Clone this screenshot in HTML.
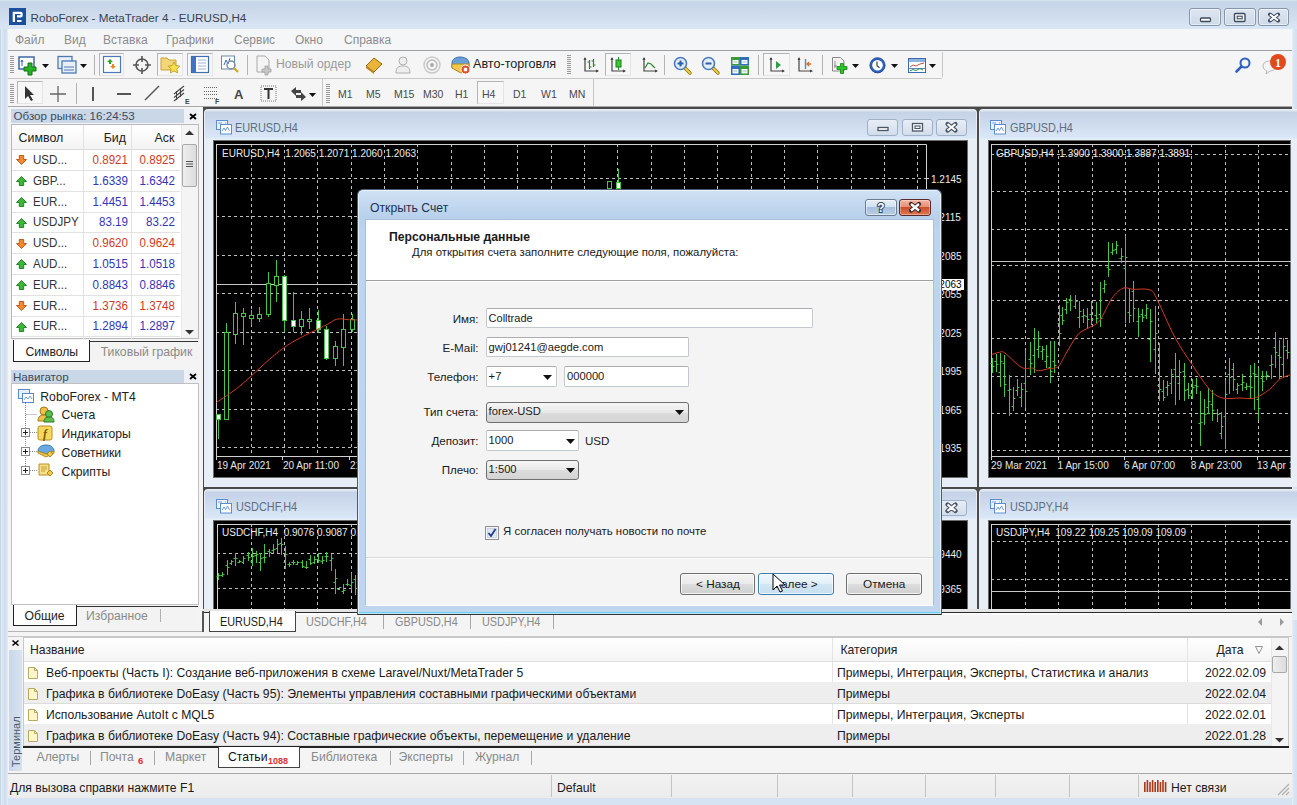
<!DOCTYPE html><html><head><meta charset="utf-8"><style>
*{margin:0;padding:0;box-sizing:border-box}
html,body{width:1297px;height:805px;overflow:hidden}
body{position:relative;background:#c6d8ed;font-family:"Liberation Sans",sans-serif;font-size:12px;color:#000}
.a{position:absolute}
.t{position:absolute;line-height:1;white-space:nowrap}
svg{position:absolute;overflow:visible}
</style></head><body><div class="a" style="left:0px;top:0px;width:1297px;height:805px;background:linear-gradient(#dbe5f0 0,#c6d4e7 2px,#cddbec 14px,#d8e6f5 28px,#d4e2f2 40px,#d6e3f2)"></div>
<div class="a" style="left:0px;top:29px;width:8px;height:776px;background:linear-gradient(90deg,#b8d0d8 0,#e0e9f6 1.5px,#cddcef 5px,#d8e4f2 7px,#eef2f6 8px)"></div>
<div class="a" style="left:1292px;top:29px;width:5px;height:776px;background:linear-gradient(90deg,#e8eef6 0,#d8e5f3 2px,#d2e0f0 5px)"></div>
<div class="a" style="left:8px;top:29px;width:1284px;height:769px;background:#f4f4f4"></div>
<svg style="left:9px;top:8px" width="17" height="17"><rect width="17" height="17" fill="#1c4f9c"/><path d="M3.7 3.7h8a2 2 0 0 1 2 2v1.8a2 2 0 0 1-2 2h-3.7v-2.2h3.5v-1.4h-5.5v8.1h-2.3z" fill="#fff"/><rect x="8" y="12" width="4.5" height="2" fill="#fff"/></svg>
<div class="t" style="left:30.5px;top:11.6px;font-size:11.7px;color:#3a4252;font-weight:400;">RoboForex - MetaTrader 4 - EURUSD,H4</div>
<div class="a" style="left:1189px;top:8px;width:32px;height:18px;background:linear-gradient(#dde6f1,#cfdae8);border:1px solid #8796ab;border-radius:3px;box-shadow:inset 0 0 0 1px rgba(255,255,255,.5)"></div>
<div class="a" style="left:1224px;top:8px;width:32px;height:18px;background:linear-gradient(#dde6f1,#cfdae8);border:1px solid #8796ab;border-radius:3px;box-shadow:inset 0 0 0 1px rgba(255,255,255,.5)"></div>
<div class="a" style="left:1258px;top:8px;width:31px;height:18px;background:linear-gradient(#dde6f1,#cfdae8);border:1px solid #8796ab;border-radius:3px;box-shadow:inset 0 0 0 1px rgba(255,255,255,.5)"></div>
<svg style="left:1189px;top:8px" width="100" height="18"><rect x="11.5" y="10" width="10" height="3.5" rx="1" fill="#fff" stroke="#3c4a5e" stroke-width="1.3"/><rect x="45.5" y="5.5" width="10.5" height="8" rx="1" fill="#fff" stroke="#3c4a5e" stroke-width="1.4"/><rect x="48.2" y="8.2" width="5" height="2.6" fill="none" stroke="#3c4a5e" stroke-width="1.1"/><path d="M81 6.5l8 6M89 6.5l-8 6" stroke="#3c4a5e" stroke-width="4" stroke-linecap="round"/><path d="M81 6.5l8 6M89 6.5l-8 6" stroke="#fff" stroke-width="2.1"/></svg>
<div class="a" style="left:8px;top:29px;width:1284px;height:21px;background:#f5f6f7"></div>
<div class="a" style="left:8px;top:50px;width:1284px;height:1px;background:#a0a0a0"></div>
<div class="t" style="left:15.0px;top:34.1px;font-size:12px;color:#8c8c8c;font-weight:400;">Файл</div>
<div class="t" style="left:64.0px;top:34.1px;font-size:12px;color:#8c8c8c;font-weight:400;">Вид</div>
<div class="t" style="left:103.0px;top:34.1px;font-size:12px;color:#8c8c8c;font-weight:400;">Вставка</div>
<div class="t" style="left:166.0px;top:34.1px;font-size:12px;color:#8c8c8c;font-weight:400;">Графики</div>
<div class="t" style="left:234.0px;top:34.1px;font-size:12px;color:#8c8c8c;font-weight:400;">Сервис</div>
<div class="t" style="left:295.0px;top:34.1px;font-size:12px;color:#8c8c8c;font-weight:400;">Окно</div>
<div class="t" style="left:344.0px;top:34.1px;font-size:12px;color:#8c8c8c;font-weight:400;">Справка</div>
<div class="a" style="left:8px;top:51px;width:1284px;height:56px;background:#f5f5f5"></div>
<div class="a" style="left:8px;top:78px;width:934px;height:1px;background:#c8c8c8"></div>
<div class="a" style="left:8px;top:106px;width:1284px;height:3px;background:#3a3a3a"></div>
<div class="a" style="left:8px;top:106px;width:1284px;height:1px;background:#a8a8a8"></div>
<svg style="left:10px;top:56px" width="4" height="18"><rect x="0" y="0" width="4" height="1" fill="#9a9a9a"/><rect x="0" y="2" width="4" height="1" fill="#9a9a9a"/><rect x="0" y="4" width="4" height="1" fill="#9a9a9a"/><rect x="0" y="6" width="4" height="1" fill="#9a9a9a"/><rect x="0" y="8" width="4" height="1" fill="#9a9a9a"/><rect x="0" y="10" width="4" height="1" fill="#9a9a9a"/><rect x="0" y="12" width="4" height="1" fill="#9a9a9a"/><rect x="0" y="14" width="4" height="1" fill="#9a9a9a"/><rect x="0" y="16" width="4" height="1" fill="#9a9a9a"/></svg>
<svg style="left:18px;top:55px" width="22" height="22"><rect x="1" y="2" width="15" height="12" fill="#fff" stroke="#3d6aa8" stroke-width="1.5"/><path d="M4 5v6M4 5l-1 2M4 5l1 2" stroke="#3d6aa8" stroke-width="1"/><path d="M10 8h4v4h4v4h-4v4h-4v-4h-4v-4h4z" fill="#27b227" stroke="#137013" stroke-width="1"/></svg>
<svg style="left:42px;top:64px" width="7" height="4"><path d="M0 0h7l-3.5 4z" fill="#111"/></svg>
<svg style="left:57px;top:55px" width="22" height="22"><rect x="1" y="1.5" width="14" height="12" fill="#e8eff8" stroke="#4e79b3" stroke-width="1.3"/><rect x="5" y="6" width="14" height="12" fill="#e8eff8" stroke="#4e79b3" stroke-width="1.3"/><path d="M7 12h10M7 15h10" stroke="#4e79b3" stroke-width="1"/></svg>
<svg style="left:80px;top:64px" width="7" height="4"><path d="M0 0h7l-3.5 4z" fill="#111"/></svg>
<div class="a" style="left:94px;top:55px;width:1px;height:20px;background:#b4b4b4"></div>
<div class="a" style="left:99px;top:53px;width:25px;height:23px;background:#f7f7f7;border:1px solid;border-color:#b4b4b4 #e4e4e4 #e4e4e4 #b4b4b4"></div>
<svg style="left:103px;top:56px" width="18" height="18"><rect x="0.5" y="0.5" width="17" height="16" fill="#fff" stroke="#4a78b8" stroke-width="1.2"/><path d="M7 3l3 3h-2v2h-2v-2h-2z" fill="#2aa52a"/><path d="M10 13l3-3h-2v-2h-2v2h-2z" fill="#e88a2a"/></svg>
<svg style="left:133px;top:56px" width="18" height="18"><circle cx="9" cy="9" r="6" fill="none" stroke="#555" stroke-width="1.6"/><path d="M9 0v6M9 12v6M0 9h6M12 9h6" stroke="#555" stroke-width="1.6"/></svg>
<div class="a" style="left:157px;top:53px;width:26px;height:23px;background:#f7f7f7;border:1px solid;border-color:#b4b4b4 #e4e4e4 #e4e4e4 #b4b4b4"></div>
<svg style="left:160px;top:55px" width="22" height="20"><path d="M1 3h6l2 2h7v10h-15z" fill="#f3d67a" stroke="#c9a23a"/><path d="M14 7l1.8 3.6 4 .5-2.9 2.8.7 4-3.6-1.9-3.6 1.9.7-4-2.9-2.8 4-.5z" fill="#f7e04a" stroke="#b8962a" stroke-width=".8"/></svg>
<div class="a" style="left:187px;top:53px;width:26px;height:23px;background:#f7f7f7;border:1px solid;border-color:#b4b4b4 #e4e4e4 #e4e4e4 #b4b4b4"></div>
<svg style="left:191px;top:56px" width="19" height="18"><rect x="0.5" y="0.5" width="17" height="16" fill="#fff" stroke="#3f6fb0" stroke-width="1.2"/><rect x="1" y="1" width="4" height="15" fill="#3f74c0"/><path d="M7 4h8M7 7h8M7 10h8M7 13h8" stroke="#9bb4d8"/></svg>
<svg style="left:221px;top:55px" width="20" height="20"><rect x="0.5" y="1" width="13" height="13" fill="#fff" stroke="#6e87a8"/><path d="M3 10l2-5 2 4 2-6" stroke="#3f6fb0" fill="none"/><circle cx="10" cy="10" r="4" fill="none" stroke="#7a8fa8" stroke-width="1.4"/><path d="M13 13l4 4" stroke="#d9a520" stroke-width="2.2"/></svg>
<div class="a" style="left:247px;top:55px;width:1px;height:20px;background:#b4b4b4"></div>
<svg style="left:256px;top:55px" width="18" height="20"><path d="M1 1h8l4 4v12h-12z" fill="#f4f4f4" stroke="#a8a8a8"/><path d="M9 11h3v3h3v3h-3v3h-3v-3h-3v-3h3z" fill="#c8c8c8" stroke="#a0a0a0" stroke-width=".8"/></svg>
<div class="t" style="left:276.0px;top:58.1px;font-size:12.2px;color:#9a9a9a;font-weight:400;">Новый ордер</div>
<svg style="left:364px;top:56px" width="20" height="18"><path d="M2 10l8-8 8 6-8 8z" fill="#e8b53a" stroke="#9a6a10"/><path d="M2 10l8 6v2l-8-6z" fill="#b8841a"/></svg>
<svg style="left:395px;top:55px" width="18" height="20"><circle cx="8" cy="6" r="4" fill="#eee" stroke="#b0b0b0"/><path d="M1 18c0-6 3-7 7-7s7 1 7 7z" fill="#eee" stroke="#b0b0b0"/></svg>
<svg style="left:423px;top:56px" width="18" height="18"><circle cx="9" cy="9" r="2" fill="#aaa"/><circle cx="9" cy="9" r="5" fill="none" stroke="#b8b8b8" stroke-width="1.4"/><circle cx="9" cy="9" r="8" fill="none" stroke="#c8c8c8" stroke-width="1.4"/></svg>
<svg style="left:451px;top:55px" width="20" height="20"><path d="M1 8c0-4 4-6 8-6s9 2 9 6v5h-17z" fill="#6aa0d8" stroke="#3d6ea8"/><path d="M1 9h17v4l-8 5-9-5z" fill="#f2c84a" stroke="#b08a20"/><circle cx="14.5" cy="14.5" r="4.5" fill="#e24a2a" stroke="#fff"/><rect x="12.8" y="12.8" width="3.4" height="3.4" fill="#fff"/></svg>
<div class="t" style="left:473.0px;top:58.0px;font-size:12.6px;color:#222;font-weight:400;">Авто-торговля</div>
<svg style="left:567px;top:55px" width="4" height="20"><rect x="0" y="0" width="4" height="1" fill="#9a9a9a"/><rect x="0" y="2" width="4" height="1" fill="#9a9a9a"/><rect x="0" y="4" width="4" height="1" fill="#9a9a9a"/><rect x="0" y="6" width="4" height="1" fill="#9a9a9a"/><rect x="0" y="8" width="4" height="1" fill="#9a9a9a"/><rect x="0" y="10" width="4" height="1" fill="#9a9a9a"/><rect x="0" y="12" width="4" height="1" fill="#9a9a9a"/><rect x="0" y="14" width="4" height="1" fill="#9a9a9a"/><rect x="0" y="16" width="4" height="1" fill="#9a9a9a"/><rect x="0" y="18" width="4" height="1" fill="#9a9a9a"/></svg>
<svg style="left:582px;top:56px" width="18" height="18"><path d="M3 2v13h13" stroke="#444" fill="none" stroke-width="1.2"/><path d="M1.5 4l1.5-3 1.5 3M14 13.5l3 1.5-3 1.5" fill="#444"/><path d="M7.5 4v9M5.5 6h2M7.5 11h2M11.5 3v8M9.5 5h2M11.5 9h2" stroke="#2a8a2a" stroke-width="1.2"/></svg>
<div class="a" style="left:605px;top:53px;width:26px;height:23px;background:#f7f7f7;border:1px solid;border-color:#b4b4b4 #e4e4e4 #e4e4e4 #b4b4b4"></div>
<svg style="left:609px;top:56px" width="18" height="18"><path d="M3 2v13h13" stroke="#444" fill="none" stroke-width="1.2"/><path d="M1.5 4l1.5-3 1.5 3M14 13.5l3 1.5-3 1.5" fill="#444"/><path d="M9.5 1v13" stroke="#2a8a2a"/><rect x="7" y="4" width="5" height="7" fill="#3cc43c" stroke="#1e7a1e"/></svg>
<svg style="left:641px;top:56px" width="18" height="18"><path d="M3 2v13h13" stroke="#444" fill="none" stroke-width="1.2"/><path d="M1.5 4l1.5-3 1.5 3M14 13.5l3 1.5-3 1.5" fill="#444"/><path d="M4 12l3-5 3 1 4 4" stroke="#2a8a2a" fill="none" stroke-width="1.2"/></svg>
<div class="a" style="left:664px;top:55px;width:1px;height:20px;background:#b4b4b4"></div>
<svg style="left:673px;top:56px" width="20" height="20"><path d="M11.5 11.5l5.5 5.5" stroke="#8a7010" stroke-width="3.4" stroke-linecap="round"/><path d="M11.5 11.5l5.5 5.5" stroke="#f0d040" stroke-width="1.8" stroke-linecap="round"/><circle cx="7.5" cy="7.5" r="6" fill="#e4eef8" stroke="#4a7ac0" stroke-width="1.6"/><path d="M4.5 7.5h6M7.5 4.5v6" stroke="#2a5fb0" stroke-width="2"/></svg>
<svg style="left:701px;top:56px" width="20" height="20"><path d="M11.5 11.5l5.5 5.5" stroke="#8a7010" stroke-width="3.4" stroke-linecap="round"/><path d="M11.5 11.5l5.5 5.5" stroke="#f0d040" stroke-width="1.8" stroke-linecap="round"/><circle cx="7.5" cy="7.5" r="6" fill="#e4eef8" stroke="#4a7ac0" stroke-width="1.6"/><path d="M4.5 7.5h6" stroke="#2a5fb0" stroke-width="2"/></svg>
<svg style="left:731px;top:57px" width="18" height="18"><rect x="0" y="0" width="9" height="8.5" fill="#3a9a3a"/><rect x="9" y="0" width="9" height="8.5" fill="#2f6cc0"/><rect x="0" y="8.5" width="9" height="9.5" fill="#2f6cc0"/><rect x="9" y="8.5" width="9" height="9.5" fill="#3a9a3a"/><rect x="1.5" y="3" width="6" height="4" fill="#f4f8fc"/><rect x="10.5" y="3" width="6" height="4" fill="#f4f8fc"/><rect x="1.5" y="12" width="6" height="4.5" fill="#f4f8fc"/><rect x="10.5" y="12" width="6" height="4.5" fill="#f4f8fc"/><path d="M2.5 5h4M11.5 5h4M2.5 14h4M11.5 14h4" stroke="#8aa" stroke-width=".7"/></svg>
<div class="a" style="left:758px;top:55px;width:1px;height:20px;background:#b4b4b4"></div>
<div class="a" style="left:763px;top:53px;width:27px;height:23px;background:#f7f7f7;border:1px solid;border-color:#b4b4b4 #e4e4e4 #e4e4e4 #b4b4b4"></div>
<svg style="left:768px;top:56px" width="18" height="18"><path d="M3 2v13h13" stroke="#444" fill="none" stroke-width="1.2"/><path d="M1.5 4l1.5-3 1.5 3M14 13.5l3 1.5-3 1.5" fill="#444"/><path d="M8 5v8l5-4z" fill="#2aa04a"/></svg>
<svg style="left:796px;top:56px" width="18" height="18"><path d="M3 2v13h13" stroke="#444" fill="none" stroke-width="1.2"/><path d="M1.5 4l1.5-3 1.5 3M14 13.5l3 1.5-3 1.5" fill="#444"/><path d="M9.5 3v10" stroke="#4a8ac0" stroke-width="1.4"/><path d="M15 8h-4M13 6l-2 2 2 2" stroke="#e06a20" fill="none" stroke-width="1.3"/></svg>
<div class="a" style="left:822px;top:55px;width:1px;height:20px;background:#b4b4b4"></div>
<svg style="left:832px;top:57px" width="18" height="19"><path d="M.5 .5h8l3.5 3.5v10h-11.5z" fill="#f2f2f2" stroke="#8a8a8a"/><path d="M3 4v7M2 9h3" stroke="#777" stroke-width=".8"/><path d="M8.5 6.5h3v3h3.5v3h-3.5v4h-3v-4h-3.5v-3h3.5z" fill="#2ec42e" stroke="#158015" stroke-width=".8"/></svg>
<svg style="left:852px;top:64px" width="7" height="4"><path d="M0 0h7l-3.5 4z" fill="#111"/></svg>
<svg style="left:869px;top:57px" width="18" height="17"><circle cx="8.5" cy="8.3" r="7.6" fill="#2a62c4" stroke="#1a3a80" stroke-width=".8"/><circle cx="8.5" cy="8.3" r="5.3" fill="#fff"/><path d="M8 4.5v4.3l2.5 2" stroke="#333" fill="none" stroke-width="1.1"/></svg>
<svg style="left:891px;top:64px" width="7" height="4"><path d="M0 0h7l-3.5 4z" fill="#111"/></svg>
<svg style="left:908px;top:58px" width="18" height="15"><rect x="0.5" y="0.5" width="17" height="14" fill="#fff" stroke="#3a6ab0"/><rect x="1" y="1" width="16" height="3" fill="#8fb2e0"/><path d="M2 9l3-2 3 1 4-2 4-1" stroke="#c05040" fill="none" stroke-width="1"/><path d="M1 10.5h16" stroke="#3a6ab0" stroke-width=".8"/><path d="M2 13l3-1.5 3 1 4-2 3 1.5" stroke="#2a8a4a" fill="none" stroke-width="1"/></svg>
<svg style="left:929px;top:64px" width="7" height="4"><path d="M0 0h7l-3.5 4z" fill="#111"/></svg>
<div class="a" style="left:942px;top:52px;width:1px;height:25px;background:#c8c8c8"></div>
<svg style="left:1235px;top:57px" width="17" height="16"><circle cx="10" cy="6" r="4.5" fill="none" stroke="#2f5fc0" stroke-width="2"/><path d="M6.5 9.5l-5 5" stroke="#2f5fc0" stroke-width="2.6" stroke-linecap="round"/></svg>
<svg style="left:1261px;top:53px" width="28" height="24"><path d="M2 13c0-3 3-5 7-5s6 2 6 5-3 5-6 5l-4 3 1-3c-2-1-4-2-4-5z" fill="#f4f4f4" stroke="#b8b8b8"/><circle cx="17" cy="9" r="8" fill="#e04a1c"/><text x="17" y="13.5" font-family="Liberation Serif" font-size="12" font-weight="700" fill="#fff" text-anchor="middle">1</text></svg>
<svg style="left:10px;top:84px" width="4" height="20"><rect x="0" y="0" width="4" height="1" fill="#9a9a9a"/><rect x="0" y="2" width="4" height="1" fill="#9a9a9a"/><rect x="0" y="4" width="4" height="1" fill="#9a9a9a"/><rect x="0" y="6" width="4" height="1" fill="#9a9a9a"/><rect x="0" y="8" width="4" height="1" fill="#9a9a9a"/><rect x="0" y="10" width="4" height="1" fill="#9a9a9a"/><rect x="0" y="12" width="4" height="1" fill="#9a9a9a"/><rect x="0" y="14" width="4" height="1" fill="#9a9a9a"/><rect x="0" y="16" width="4" height="1" fill="#9a9a9a"/><rect x="0" y="18" width="4" height="1" fill="#9a9a9a"/></svg>
<div class="a" style="left:17px;top:81px;width:26px;height:23px;background:#f7f7f7;border:1px solid;border-color:#b4b4b4 #e4e4e4 #e4e4e4 #b4b4b4"></div>
<svg style="left:23px;top:85px" width="14" height="16"><path d="M2 1v13l3-3 3 5 2-1-3-5h4z" fill="#333"/></svg>
<svg style="left:49px;top:85px" width="18" height="18"><path d="M9 1v16M1 9h16" stroke="#666" stroke-width="1.3"/></svg>
<div class="a" style="left:76px;top:83px;width:1px;height:21px;background:#b4b4b4"></div>
<div class="a" style="left:92px;top:87px;width:2px;height:14px;background:#555"></div>
<div class="a" style="left:117px;top:93px;width:14px;height:2px;background:#555"></div>
<svg style="left:144px;top:85px" width="16" height="16"><path d="M1 15l14-14" stroke="#555" stroke-width="1.4"/></svg>
<svg style="left:172px;top:84px" width="20" height="22"><path d="M2 10l10-8M2 13.5l10-8M2 17l10-8" stroke="#444" stroke-width="1.1"/><path d="M4.5 7v9M8.5 4v9" stroke="#444"/><text x="13" y="20" font-family="Liberation Sans" font-size="7" font-weight="700" fill="#444">E</text></svg>
<svg style="left:203px;top:85px" width="20" height="20"><path d="M1 2.5h13M1 6.5h13M1 9.5h13M1 13.5h13" stroke="#666" stroke-dasharray="1 1"/><text x="12" y="19" font-family="Liberation Sans" font-size="7" font-weight="700" fill="#444">F</text></svg>
<div class="t" style="left:234.0px;top:87.5px;font-size:13px;color:#444;font-weight:700;">A</div>
<svg style="left:260px;top:85px" width="18" height="18"><rect x="1" y="1" width="15" height="15" fill="none" stroke="#777" stroke-dasharray="1 1"/><path d="M4 4h9M8.5 4v10" stroke="#333" stroke-width="2"/></svg>
<svg style="left:290px;top:86px" width="18" height="16"><path d="M1 5l5-4v3h5v3h-5v3z" fill="#444"/><path d="M16 11l-5 4v-3h-5v-3h5v-3z" fill="#444"/></svg>
<svg style="left:309px;top:93px" width="7" height="4"><path d="M0 0h7l-3.5 4z" fill="#111"/></svg>
<div class="a" style="left:322px;top:79px;width:1px;height:27px;background:#c8c8c8"></div>
<svg style="left:326px;top:84px" width="4" height="20"><rect x="0" y="0" width="4" height="1" fill="#9a9a9a"/><rect x="0" y="2" width="4" height="1" fill="#9a9a9a"/><rect x="0" y="4" width="4" height="1" fill="#9a9a9a"/><rect x="0" y="6" width="4" height="1" fill="#9a9a9a"/><rect x="0" y="8" width="4" height="1" fill="#9a9a9a"/><rect x="0" y="10" width="4" height="1" fill="#9a9a9a"/><rect x="0" y="12" width="4" height="1" fill="#9a9a9a"/><rect x="0" y="14" width="4" height="1" fill="#9a9a9a"/><rect x="0" y="16" width="4" height="1" fill="#9a9a9a"/><rect x="0" y="18" width="4" height="1" fill="#9a9a9a"/></svg>
<div class="t" style="left:338.0px;top:88.8px;font-size:10.5px;color:#4a4a4a;font-weight:400;">M1</div>
<div class="t" style="left:366.0px;top:88.8px;font-size:10.5px;color:#4a4a4a;font-weight:400;">M5</div>
<div class="t" style="left:394.0px;top:88.8px;font-size:10.5px;color:#4a4a4a;font-weight:400;">M15</div>
<div class="t" style="left:423.0px;top:88.8px;font-size:10.5px;color:#4a4a4a;font-weight:400;">M30</div>
<div class="t" style="left:455.0px;top:88.8px;font-size:10.5px;color:#4a4a4a;font-weight:400;">H1</div>
<div class="a" style="left:477px;top:81px;width:27px;height:23px;background:#f7f7f7;border:1px solid;border-color:#b4b4b4 #e4e4e4 #e4e4e4 #b4b4b4"></div>
<div class="t" style="left:482.0px;top:88.8px;font-size:10.5px;color:#4a4a4a;font-weight:400;">H4</div>
<div class="t" style="left:513.0px;top:88.8px;font-size:10.5px;color:#4a4a4a;font-weight:400;">D1</div>
<div class="t" style="left:541.0px;top:88.8px;font-size:10.5px;color:#4a4a4a;font-weight:400;">W1</div>
<div class="t" style="left:569.0px;top:88.8px;font-size:10.5px;color:#4a4a4a;font-weight:400;">MN</div>
<div class="a" style="left:593px;top:79px;width:1px;height:27px;background:#c8c8c8"></div>
<div class="a" style="left:8px;top:107px;width:195px;height:525px;background:#f4f4f4"></div>
<div class="a" style="left:11px;top:109px;width:173px;height:14px;background:#cad7e7"></div>
<div class="a" style="left:184px;top:109px;width:15px;height:14px;background:#eef2f6"></div>
<div class="t" style="left:13.5px;top:110.4px;font-size:11.6px;color:#3b4a5c;font-weight:400;">Обзор рынка: 16:24:53</div>
<svg style="left:189px;top:113px" width="8" height="7"><path d="M1 1l6 5M7 1l-6 5" stroke="#000" stroke-width="1.8"/></svg>
<div class="a" style="left:11px;top:124px;width:188px;height:215px;background:#fff;border:1px solid #b8b8b8"></div>
<div class="a" style="left:12px;top:125px;width:168px;height:24px;background:linear-gradient(#fff,#f3f3f3)"></div>
<div class="a" style="left:12px;top:149px;width:168px;height:1px;background:#d8d8d8"></div>
<div class="a" style="left:83px;top:125px;width:1px;height:214px;background:#e2e2e2"></div>
<div class="a" style="left:131px;top:125px;width:1px;height:214px;background:#e2e2e2"></div>
<div class="t" style="left:18.6px;top:132.0px;font-size:12.4px;color:#222;font-weight:400;">Символ</div>
<div class="t" style="left:126.0px;top:132.0px;font-size:12.4px;color:#222;font-weight:400;transform:translateX(-100%)">Бид</div>
<div class="t" style="left:174.5px;top:132.0px;font-size:12.4px;color:#222;font-weight:400;transform:translateX(-100%)">Аск</div>
<div class="a" style="left:12px;top:170px;width:168px;height:1px;background:#e2e2e2"></div>
<svg style="left:16px;top:155.4px" width="11" height="10"><path d="M5.5 9.5l5-5h-2.8v-4h-4.4v4h-2.8z" fill="#f08a30" stroke="#b85010" stroke-width=".9"/></svg>
<div class="t" style="left:33.0px;top:154.0px;font-size:12.6px;color:#333;font-weight:400;transform:scaleX(.92);transform-origin:0 0">USD...</div>
<div class="t" style="left:127.5px;top:154.0px;font-size:12.6px;color:#cf3a22;font-weight:400;transform:translateX(-100%) scaleX(.92);transform-origin:100% 0">0.8921</div>
<div class="t" style="left:174.5px;top:154.0px;font-size:12.6px;color:#cf3a22;font-weight:400;transform:translateX(-100%) scaleX(.92);transform-origin:100% 0">0.8925</div>
<div class="a" style="left:12px;top:191px;width:168px;height:1px;background:#e2e2e2"></div>
<svg style="left:16px;top:176.2px" width="11" height="10"><path d="M5.5 0.5l5 5h-2.8v4h-4.4v-4h-2.8z" fill="#39b739" stroke="#1d7a1d" stroke-width=".9"/></svg>
<div class="t" style="left:33.0px;top:174.8px;font-size:12.6px;color:#333;font-weight:400;transform:scaleX(.92);transform-origin:0 0">GBP...</div>
<div class="t" style="left:127.5px;top:174.8px;font-size:12.6px;color:#3434b8;font-weight:400;transform:translateX(-100%) scaleX(.92);transform-origin:100% 0">1.6339</div>
<div class="t" style="left:174.5px;top:174.8px;font-size:12.6px;color:#3434b8;font-weight:400;transform:translateX(-100%) scaleX(.92);transform-origin:100% 0">1.6342</div>
<div class="a" style="left:12px;top:212px;width:168px;height:1px;background:#e2e2e2"></div>
<svg style="left:16px;top:197.0px" width="11" height="10"><path d="M5.5 0.5l5 5h-2.8v4h-4.4v-4h-2.8z" fill="#39b739" stroke="#1d7a1d" stroke-width=".9"/></svg>
<div class="t" style="left:33.0px;top:195.6px;font-size:12.6px;color:#333;font-weight:400;transform:scaleX(.92);transform-origin:0 0">EUR...</div>
<div class="t" style="left:127.5px;top:195.6px;font-size:12.6px;color:#3434b8;font-weight:400;transform:translateX(-100%) scaleX(.92);transform-origin:100% 0">1.4451</div>
<div class="t" style="left:174.5px;top:195.6px;font-size:12.6px;color:#3434b8;font-weight:400;transform:translateX(-100%) scaleX(.92);transform-origin:100% 0">1.4453</div>
<div class="a" style="left:12px;top:232px;width:168px;height:1px;background:#e2e2e2"></div>
<svg style="left:16px;top:217.8px" width="11" height="10"><path d="M5.5 0.5l5 5h-2.8v4h-4.4v-4h-2.8z" fill="#39b739" stroke="#1d7a1d" stroke-width=".9"/></svg>
<div class="t" style="left:33.0px;top:216.4px;font-size:12.6px;color:#333;font-weight:400;transform:scaleX(.92);transform-origin:0 0">USDJPY</div>
<div class="t" style="left:127.5px;top:216.4px;font-size:12.6px;color:#3434b8;font-weight:400;transform:translateX(-100%) scaleX(.92);transform-origin:100% 0">83.19</div>
<div class="t" style="left:174.5px;top:216.4px;font-size:12.6px;color:#3434b8;font-weight:400;transform:translateX(-100%) scaleX(.92);transform-origin:100% 0">83.22</div>
<div class="a" style="left:12px;top:253px;width:168px;height:1px;background:#e2e2e2"></div>
<svg style="left:16px;top:238.6px" width="11" height="10"><path d="M5.5 9.5l5-5h-2.8v-4h-4.4v4h-2.8z" fill="#f08a30" stroke="#b85010" stroke-width=".9"/></svg>
<div class="t" style="left:33.0px;top:237.2px;font-size:12.6px;color:#333;font-weight:400;transform:scaleX(.92);transform-origin:0 0">USD...</div>
<div class="t" style="left:127.5px;top:237.2px;font-size:12.6px;color:#cf3a22;font-weight:400;transform:translateX(-100%) scaleX(.92);transform-origin:100% 0">0.9620</div>
<div class="t" style="left:174.5px;top:237.2px;font-size:12.6px;color:#cf3a22;font-weight:400;transform:translateX(-100%) scaleX(.92);transform-origin:100% 0">0.9624</div>
<div class="a" style="left:12px;top:274px;width:168px;height:1px;background:#e2e2e2"></div>
<svg style="left:16px;top:259.4px" width="11" height="10"><path d="M5.5 0.5l5 5h-2.8v4h-4.4v-4h-2.8z" fill="#39b739" stroke="#1d7a1d" stroke-width=".9"/></svg>
<div class="t" style="left:33.0px;top:258.0px;font-size:12.6px;color:#333;font-weight:400;transform:scaleX(.92);transform-origin:0 0">AUD...</div>
<div class="t" style="left:127.5px;top:258.0px;font-size:12.6px;color:#3434b8;font-weight:400;transform:translateX(-100%) scaleX(.92);transform-origin:100% 0">1.0515</div>
<div class="t" style="left:174.5px;top:258.0px;font-size:12.6px;color:#3434b8;font-weight:400;transform:translateX(-100%) scaleX(.92);transform-origin:100% 0">1.0518</div>
<div class="a" style="left:12px;top:295px;width:168px;height:1px;background:#e2e2e2"></div>
<svg style="left:16px;top:280.2px" width="11" height="10"><path d="M5.5 0.5l5 5h-2.8v4h-4.4v-4h-2.8z" fill="#39b739" stroke="#1d7a1d" stroke-width=".9"/></svg>
<div class="t" style="left:33.0px;top:278.8px;font-size:12.6px;color:#333;font-weight:400;transform:scaleX(.92);transform-origin:0 0">EUR...</div>
<div class="t" style="left:127.5px;top:278.8px;font-size:12.6px;color:#3434b8;font-weight:400;transform:translateX(-100%) scaleX(.92);transform-origin:100% 0">0.8843</div>
<div class="t" style="left:174.5px;top:278.8px;font-size:12.6px;color:#3434b8;font-weight:400;transform:translateX(-100%) scaleX(.92);transform-origin:100% 0">0.8846</div>
<div class="a" style="left:12px;top:316px;width:168px;height:1px;background:#e2e2e2"></div>
<svg style="left:16px;top:301.0px" width="11" height="10"><path d="M5.5 9.5l5-5h-2.8v-4h-4.4v4h-2.8z" fill="#f08a30" stroke="#b85010" stroke-width=".9"/></svg>
<div class="t" style="left:33.0px;top:299.6px;font-size:12.6px;color:#333;font-weight:400;transform:scaleX(.92);transform-origin:0 0">EUR...</div>
<div class="t" style="left:127.5px;top:299.6px;font-size:12.6px;color:#cf3a22;font-weight:400;transform:translateX(-100%) scaleX(.92);transform-origin:100% 0">1.3736</div>
<div class="t" style="left:174.5px;top:299.6px;font-size:12.6px;color:#cf3a22;font-weight:400;transform:translateX(-100%) scaleX(.92);transform-origin:100% 0">1.3748</div>
<div class="a" style="left:12px;top:336px;width:168px;height:1px;background:#e2e2e2"></div>
<svg style="left:16px;top:321.8px" width="11" height="10"><path d="M5.5 0.5l5 5h-2.8v4h-4.4v-4h-2.8z" fill="#39b739" stroke="#1d7a1d" stroke-width=".9"/></svg>
<div class="t" style="left:33.0px;top:320.4px;font-size:12.6px;color:#333;font-weight:400;transform:scaleX(.92);transform-origin:0 0">EUR...</div>
<div class="t" style="left:127.5px;top:320.4px;font-size:12.6px;color:#3434b8;font-weight:400;transform:translateX(-100%) scaleX(.92);transform-origin:100% 0">1.2894</div>
<div class="t" style="left:174.5px;top:320.4px;font-size:12.6px;color:#3434b8;font-weight:400;transform:translateX(-100%) scaleX(.92);transform-origin:100% 0">1.2897</div>
<div class="a" style="left:181px;top:125px;width:17px;height:213px;background:#f4f4f4;border-left:1px solid #e8e8e8"></div>
<svg style="left:185px;top:130px" width="9" height="6"><path d="M0 5l4.5-4.5 4.5 4.5z" fill="#333"/></svg>
<svg style="left:185px;top:329px" width="9" height="6"><path d="M0 1l4.5 4.5 4.5-4.5z" fill="#333"/></svg>
<div class="a" style="left:182px;top:144px;width:15px;height:43px;background:linear-gradient(90deg,#eee,#dcdcdc);border:1px solid #a8a8a8;border-radius:2px"></div>
<svg style="left:186px;top:161px" width="7" height="7"><path d="M0 0.5h7M0 3h7M0 5.5h7" stroke="#555"/></svg>
<div class="a" style="left:89px;top:341px;width:109px;height:1px;background:#333"></div>
<div class="a" style="left:90px;top:342px;width:108px;height:19px;background:#f3f3f3"></div>
<div class="a" style="left:13px;top:340px;width:77px;height:22px;background:#fff;border:1.5px solid #222;border-top:none"></div>
<div class="t" style="left:25.4px;top:346.1px;font-size:12.2px;color:#222;font-weight:400;">Символы</div>
<div class="t" style="left:100.7px;top:346.1px;font-size:12.2px;color:#8a8a8a;font-weight:400;">Тиковый график</div>
<div class="a" style="left:11px;top:370px;width:173px;height:13px;background:#cad7e7"></div>
<div class="a" style="left:184px;top:370px;width:15px;height:13px;background:#eef2f6"></div>
<div class="t" style="left:13.0px;top:371.4px;font-size:11.6px;color:#3b4a5c;font-weight:400;">Навигатор</div>
<svg style="left:189px;top:373px" width="8" height="7"><path d="M1 1l6 5M7 1l-6 5" stroke="#000" stroke-width="1.8"/></svg>
<div class="a" style="left:11px;top:383px;width:188px;height:222px;background:#fff;border:1px solid #c0c0c0"></div>
<svg style="left:20px;top:400px" width="20" height="78"><path d="M5.5 3v68M5.5 14.5h12M10 32.5h7M10 51.5h7M10 70.5h7" stroke="#909090" stroke-dasharray="1 1" fill="none"/><rect x="1.5" y="28.5" width="8" height="8" fill="#fff" stroke="#8a8a8a"/><path d="M3 32.5h5M5.5 30v5" stroke="#222"/><rect x="1.5" y="47.5" width="8" height="8" fill="#fff" stroke="#8a8a8a"/><path d="M3 51.5h5M5.5 49v5" stroke="#222"/><rect x="1.5" y="66.5" width="8" height="8" fill="#fff" stroke="#8a8a8a"/><path d="M3 70.5h5M5.5 68v5" stroke="#222"/></svg>
<svg style="left:18px;top:389px" width="17" height="15"><rect x="0.5" y="0.5" width="11" height="9" fill="#e8f0fa" stroke="#5a88c8"/><rect x="4.5" y="4.5" width="11" height="9" fill="#fff" stroke="#5a88c8"/><path d="M6 11l2-3 2 2 2-3 2 3" stroke="#5a88c8" fill="none" stroke-width=".8"/></svg>
<div class="t" style="left:40.3px;top:390.6px;font-size:12.2px;color:#222;font-weight:400;">RoboForex - MT4</div>
<svg style="left:37px;top:406px" width="18" height="17"><circle cx="7" cy="5" r="4" fill="#f2c048" stroke="#a07a18"/><path d="M1 15c0-5 3-6 6-6s6 1 6 6z" fill="#f2c048" stroke="#a07a18"/><circle cx="12" cy="8" r="3.5" fill="#5bbf4a" stroke="#2a7a2a"/><path d="M7 16c0-4 2-5 5-5s5 1 5 5z" fill="#5bbf4a" stroke="#2a7a2a"/></svg>
<div class="t" style="left:61.6px;top:409.1px;font-size:12.2px;color:#222;font-weight:400;">Счета</div>
<svg style="left:37px;top:425px" width="17" height="16"><rect x="1" y="1" width="14" height="14" rx="2" fill="#f6d860" stroke="#b89020"/><text x="8" y="12.5" font-family="Liberation Serif" font-size="12" font-style="italic" font-weight="700" fill="#7a5a00" text-anchor="middle">f</text></svg>
<div class="t" style="left:61.6px;top:428.1px;font-size:12.2px;color:#222;font-weight:400;">Индикаторы</div>
<svg style="left:37px;top:444px" width="18" height="16"><path d="M1 7c0-4 4-6 8-6s8 2 8 6l-8 3z" fill="#6aa8e0" stroke="#3a78b8"/><path d="M1 7l8 3 8-3v2l-8 4-8-4z" fill="#f2c84a" stroke="#a88a20"/><path d="M10 10l3 3 3-3 -3-3z" fill="#f2c84a" stroke="#a88a20"/></svg>
<div class="t" style="left:61.6px;top:447.1px;font-size:12.2px;color:#222;font-weight:400;">Советники</div>
<svg style="left:37px;top:463px" width="17" height="17"><path d="M2 1h10v11h-10z" fill="#f6e08a" stroke="#b89020"/><path d="M4 4h6M4 6h6M4 8h4" stroke="#b89020" stroke-width=".8"/><path d="M10 10l3 3 3-3-3-3z" fill="#f2c84a" stroke="#a88a20"/></svg>
<div class="t" style="left:61.6px;top:466.1px;font-size:12.2px;color:#222;font-weight:400;">Скрипты</div>
<div class="a" style="left:76px;top:606px;width:122px;height:1px;background:#333"></div>
<div class="a" style="left:77px;top:607px;width:121px;height:18px;background:#f3f3f3"></div>
<div class="a" style="left:13px;top:605px;width:64px;height:21px;background:#fff;border:1.5px solid #222;border-top:none"></div>
<div class="t" style="left:24.5px;top:610.1px;font-size:12.2px;color:#222;font-weight:400;">Общие</div>
<div class="t" style="left:86.0px;top:610.1px;font-size:12.2px;color:#8a8a8a;font-weight:400;">Избранное</div>
<div class="a" style="left:160px;top:609px;width:1px;height:13px;background:#b0b0b0"></div>
<div class="a" style="left:203px;top:107px;width:1089px;height:504px;background:#4a4a4a"></div>
<div class="a" style="left:204px;top:109px;width:773px;height:378px;background:#e8eef6;border-radius:4px 4px 0 0"></div>
<div class="a" style="left:205px;top:110px;width:771px;height:29px;background:linear-gradient(#dfe5ee 0,#dfe5ee 1px,#c5d2e7 2px,#d9e7f7 28px,#e8f0fa 29px);border-radius:3px 3px 0 0"></div>
<svg style="left:216px;top:120px" width="16" height="15"><rect x="0.5" y="0.5" width="11" height="9" fill="#eaf2fb" stroke="#5a8ed0"/><rect x="4.5" y="4.5" width="11" height="9.5" fill="#fff" stroke="#5a8ed0"/><path d="M2 3h4M9 3h1" stroke="#5a8ed0" stroke-width=".8"/><path d="M6 11l2-3 1.5 2.5 2-3.5 2 4" stroke="#5a8ed0" fill="none" stroke-width=".9"/></svg>
<div class="t" style="left:235.0px;top:121.5px;font-size:12.8px;color:#5f6e82;font-weight:400;transform:scaleX(.85);transform-origin:0 0">EURUSD,H4</div>
<div class="a" style="left:867px;top:119px;width:31px;height:17px;background:linear-gradient(#e8eef6,#d2ddea);border:1px solid #9fb1c8;border-radius:3px"></div>
<div class="a" style="left:902px;top:119px;width:31px;height:17px;background:linear-gradient(#e8eef6,#d2ddea);border:1px solid #9fb1c8;border-radius:3px"></div>
<div class="a" style="left:936px;top:119px;width:31px;height:17px;background:linear-gradient(#e8eef6,#d2ddea);border:1px solid #9fb1c8;border-radius:3px"></div>
<svg style="left:867px;top:119px" width="100" height="17"><rect x="11" y="8.5" width="10" height="3" fill="#fff" stroke="#4a5568" stroke-width="1.3"/><rect x="45.5" y="4.5" width="10" height="7.5" fill="#fff" stroke="#4a5568" stroke-width="1.3"/><rect x="48" y="7" width="5" height="2.5" fill="none" stroke="#4a5568" stroke-width="1.1"/><path d="M80.5 5l8 6.5M88.5 5l-8 6.5" stroke="#4a5568" stroke-width="4.2" stroke-linecap="round"/><path d="M80.5 5l8 6.5M88.5 5l-8 6.5" stroke="#fff" stroke-width="2.2"/></svg>
<div class="a" style="left:979px;top:109px;width:321px;height:378px;background:#e8eef6;border-radius:4px 4px 0 0"></div>
<div class="a" style="left:980px;top:110px;width:319px;height:29px;background:linear-gradient(#dfe5ee 0,#dfe5ee 1px,#c5d2e7 2px,#d9e7f7 28px,#e8f0fa 29px);border-radius:3px 3px 0 0"></div>
<svg style="left:990px;top:120px" width="16" height="15"><rect x="0.5" y="0.5" width="11" height="9" fill="#eaf2fb" stroke="#5a8ed0"/><rect x="4.5" y="4.5" width="11" height="9.5" fill="#fff" stroke="#5a8ed0"/><path d="M2 3h4M9 3h1" stroke="#5a8ed0" stroke-width=".8"/><path d="M6 11l2-3 1.5 2.5 2-3.5 2 4" stroke="#5a8ed0" fill="none" stroke-width=".9"/></svg>
<div class="t" style="left:1010.0px;top:121.5px;font-size:12.8px;color:#5f6e82;font-weight:400;transform:scaleX(.85);transform-origin:0 0">GBPUSD,H4</div>
<div class="a" style="left:204px;top:489px;width:773px;height:131px;background:#e8eef6;border-radius:4px 4px 0 0"></div>
<div class="a" style="left:205px;top:490px;width:771px;height:29px;background:linear-gradient(#dfe5ee 0,#dfe5ee 1px,#c5d2e7 2px,#d9e7f7 28px,#e8f0fa 29px);border-radius:3px 3px 0 0"></div>
<svg style="left:216px;top:499px" width="16" height="15"><rect x="0.5" y="0.5" width="11" height="9" fill="#eaf2fb" stroke="#5a8ed0"/><rect x="4.5" y="4.5" width="11" height="9.5" fill="#fff" stroke="#5a8ed0"/><path d="M2 3h4M9 3h1" stroke="#5a8ed0" stroke-width=".8"/><path d="M6 11l2-3 1.5 2.5 2-3.5 2 4" stroke="#5a8ed0" fill="none" stroke-width=".9"/></svg>
<div class="t" style="left:236.0px;top:500.5px;font-size:12.8px;color:#5f6e82;font-weight:400;transform:scaleX(.85);transform-origin:0 0">USDCHF,H4</div>
<div class="a" style="left:936px;top:500px;width:31px;height:16px;background:linear-gradient(#e8eef6,#d2ddea);border:1px solid #9fb1c8;border-radius:3px"></div>
<svg style="left:936px;top:500px" width="31" height="16"><path d="M11.5 4.5l8 6.5M19.5 4.5l-8 6.5" stroke="#4a5568" stroke-width="4.2" stroke-linecap="round"/><path d="M11.5 4.5l8 6.5M19.5 4.5l-8 6.5" stroke="#fff" stroke-width="2.2"/></svg>
<div class="a" style="left:979px;top:489px;width:321px;height:131px;background:#e8eef6;border-radius:4px 4px 0 0"></div>
<div class="a" style="left:980px;top:490px;width:319px;height:29px;background:linear-gradient(#dfe5ee 0,#dfe5ee 1px,#c5d2e7 2px,#d9e7f7 28px,#e8f0fa 29px);border-radius:3px 3px 0 0"></div>
<svg style="left:990px;top:499px" width="16" height="15"><rect x="0.5" y="0.5" width="11" height="9" fill="#eaf2fb" stroke="#5a8ed0"/><rect x="4.5" y="4.5" width="11" height="9.5" fill="#fff" stroke="#5a8ed0"/><path d="M2 3h4M9 3h1" stroke="#5a8ed0" stroke-width=".8"/><path d="M6 11l2-3 1.5 2.5 2-3.5 2 4" stroke="#5a8ed0" fill="none" stroke-width=".9"/></svg>
<div class="t" style="left:1010.0px;top:500.5px;font-size:12.8px;color:#5f6e82;font-weight:400;transform:scaleX(.85);transform-origin:0 0">USDJPY,H4</div>
<svg style="left:213px;top:140px" width="755" height="338" viewBox="213 140 755 338"><defs><clipPath id="c213140"><rect x="213" y="140" width="755" height="338"/></clipPath></defs><g clip-path="url(#c213140)"><rect x="213" y="140" width="755" height="338" fill="#000"/><rect x="213.5" y="140.5" width="754" height="337" fill="none" stroke="#6a6a6a"/><path d="M251.5 144V456M284.5 144V456M317.5 144V456M351.5 144V456M384.5 144V456M417.5 144V456M451.5 144V456M484.5 144V456M517.5 144V456M551.5 144V456M584.5 144V456M617.5 144V456M651.5 144V456M684.5 144V456M717.5 144V456M751.5 144V456M784.5 144V456M817.5 144V456M851.5 144V456M884.5 144V456M917.5 144V456M216 178.5H926M216 216.5H926M216 255.5H926M216 293.5H926M216 332.5H926M216 370.5H926M216 409.5H926M216 447.5H926" stroke="#bdbdbd" stroke-width="1" stroke-dasharray="3 3" fill="none"/><path d="M216 284.5H926" stroke="#c8c8c8" stroke-width="1"/><path d="M216.5 144V456.5H926" stroke="#d0d0d0" stroke-width="1" fill="none"/><path d="M216 144.5H926.5V456" stroke="#d0d0d0" stroke-width="1" fill="none"/><path d="M218.5 419.5V439" stroke="#48c448"/><rect x="216.5" y="414.5" width="4" height="5.0" fill="#fff" stroke="#48c448" stroke-width="1"/><path d="M226.5 323V332.5" stroke="#48c448"/><path d="M226.5 419.5V420" stroke="#48c448"/><rect x="224.5" y="332.5" width="4" height="87.0" fill="#000" stroke="#48c448" stroke-width="1"/><path d="M235.5 302V313.5" stroke="#48c448"/><path d="M235.5 334.5V344" stroke="#48c448"/><rect x="233.5" y="313.5" width="4" height="21.0" fill="#000" stroke="#48c448" stroke-width="1"/><path d="M243.5 308V313.5" stroke="#48c448"/><path d="M243.5 316.5V345" stroke="#48c448"/><rect x="241.5" y="313.5" width="4" height="3.0" fill="#000" stroke="#48c448" stroke-width="1"/><path d="M251.5 310V315.5" stroke="#48c448"/><path d="M251.5 318.5V325" stroke="#48c448"/><rect x="249.5" y="315.5" width="4" height="3.0" fill="#000" stroke="#48c448" stroke-width="1"/><path d="M259.5 307V314.5" stroke="#48c448"/><path d="M259.5 318.5V322" stroke="#48c448"/><rect x="257.5" y="314.5" width="4" height="4.0" fill="#000" stroke="#48c448" stroke-width="1"/><path d="M268.5 272V283.5" stroke="#48c448"/><path d="M268.5 314.5V317" stroke="#48c448"/><rect x="266.5" y="283.5" width="4" height="31.0" fill="#000" stroke="#48c448" stroke-width="1"/><path d="M276.5 260V276.5" stroke="#48c448"/><path d="M276.5 285.5V302" stroke="#48c448"/><rect x="274.5" y="276.5" width="4" height="9.0" fill="#000" stroke="#48c448" stroke-width="1"/><path d="M284.5 275V276.5" stroke="#48c448"/><path d="M284.5 320.5V332" stroke="#48c448"/><rect x="282.5" y="276.5" width="4" height="44.0" fill="#fff" stroke="#48c448" stroke-width="1"/><path d="M293.5 292V320.5" stroke="#48c448"/><path d="M293.5 326.5V332" stroke="#48c448"/><rect x="291.5" y="320.5" width="4" height="6.0" fill="#fff" stroke="#48c448" stroke-width="1"/><path d="M301.5 311V319.5" stroke="#48c448"/><path d="M301.5 326.5V335" stroke="#48c448"/><rect x="299.5" y="319.5" width="4" height="7.0" fill="#000" stroke="#48c448" stroke-width="1"/><path d="M309.5 308V319.5" stroke="#48c448"/><path d="M309.5 321.5V329" stroke="#48c448"/><rect x="307.5" y="319.5" width="4" height="2.0" fill="#000" stroke="#48c448" stroke-width="1"/><path d="M318.5 310V320.5" stroke="#48c448"/><path d="M318.5 329.5V332" stroke="#48c448"/><rect x="316.5" y="320.5" width="4" height="9.0" fill="#fff" stroke="#48c448" stroke-width="1"/><path d="M326.5 326V329.5" stroke="#48c448"/><path d="M326.5 358.5V360" stroke="#48c448"/><rect x="324.5" y="329.5" width="4" height="29.0" fill="#fff" stroke="#48c448" stroke-width="1"/><path d="M335.5 341V346.5" stroke="#48c448"/><path d="M335.5 358.5V366" stroke="#48c448"/><rect x="333.5" y="346.5" width="4" height="12.0" fill="#000" stroke="#48c448" stroke-width="1"/><path d="M343.5 314V329.5" stroke="#48c448"/><path d="M343.5 347.5V366" stroke="#48c448"/><rect x="341.5" y="329.5" width="4" height="18.0" fill="#000" stroke="#48c448" stroke-width="1"/><path d="M352.5 314V319.5" stroke="#48c448"/><path d="M352.5 329.5V332" stroke="#48c448"/><rect x="350.5" y="319.5" width="4" height="10.0" fill="#000" stroke="#48c448" stroke-width="1"/><rect x="607.5" y="181.5" width="4" height="7.0" fill="#000" stroke="#48c448" stroke-width="1"/><path d="M618.5 169V182.5" stroke="#48c448"/><rect x="616.5" y="182.5" width="4" height="6.0" fill="#fff" stroke="#48c448" stroke-width="1"/><path d="M216.6 402.4 C220.5 399.7 231.0 393.2 239.8 386.0 C248.6 378.8 262.2 365.6 269.6 359.2 C277.1 352.8 279.5 350.8 284.5 347.3 C289.5 343.8 292.4 342.0 299.4 338.3 C306.3 334.6 319.8 328.2 326.2 325.0 C332.6 321.8 333.0 319.8 338.0 319.0 C343.0 318.2 345.7 320.2 356.0 320.0 C366.3 319.8 392.7 318.3 400.0 318.0" stroke="#d23c26" stroke-width="1" fill="none"/><path d="M926 178.5h3" stroke="#d0d0d0"/><text x="931" y="182.8" font-family="Liberation Sans" font-size="10" fill="#ececec">1.2145</text><path d="M926 216.5h3" stroke="#d0d0d0"/><text x="931" y="221.3" font-family="Liberation Sans" font-size="10" fill="#ececec">1.2115</text><path d="M926 255.5h3" stroke="#d0d0d0"/><text x="931" y="259.8" font-family="Liberation Sans" font-size="10" fill="#ececec">1.2085</text><path d="M926 293.5h3" stroke="#d0d0d0"/><text x="931" y="298.3" font-family="Liberation Sans" font-size="10" fill="#ececec">1.2055</text><path d="M926 332.5h3" stroke="#d0d0d0"/><text x="931" y="336.8" font-family="Liberation Sans" font-size="10" fill="#ececec">1.2025</text><path d="M926 370.5h3" stroke="#d0d0d0"/><text x="931" y="375.3" font-family="Liberation Sans" font-size="10" fill="#ececec">1.1995</text><path d="M926 409.5h3" stroke="#d0d0d0"/><text x="931" y="413.8" font-family="Liberation Sans" font-size="10" fill="#ececec">1.1965</text><path d="M926 447.5h3" stroke="#d0d0d0"/><text x="931" y="452.3" font-family="Liberation Sans" font-size="10" fill="#ececec">1.1935</text><rect x="929" y="279" width="35" height="11" fill="#fff"/><text x="931" y="288" font-family="Liberation Sans" font-size="10" fill="#000">1.2063</text><path d="M216.5 456v4" stroke="#d0d0d0"/><text x="217" y="469" font-family="Liberation Sans" font-size="10" fill="#e6e6e6">19 Apr 2021</text><path d="M282.5 456v4" stroke="#d0d0d0"/><text x="283" y="469" font-family="Liberation Sans" font-size="10" fill="#e6e6e6">20 Apr 11:00</text><path d="M349.5 456v4" stroke="#d0d0d0"/><text x="350" y="469" font-family="Liberation Sans" font-size="10" fill="#e6e6e6">21 Apr 03:00</text><path d="M416.5 456v4" stroke="#d0d0d0"/><text x="417" y="469" font-family="Liberation Sans" font-size="10" fill="#e6e6e6">21 Apr 19:00</text><text x="222" y="156.5" font-family="Liberation Sans" font-size="10" fill="#ececec" xml:space="preserve" style="white-space:pre">EURUSD,H4  1.2065 1.2071 1.2060 1.2063</text></g></svg>
<svg style="left:988px;top:140px" width="303" height="338" viewBox="988 140 303 338"><defs><clipPath id="c988140"><rect x="988" y="140" width="303" height="338"/></clipPath></defs><g clip-path="url(#c988140)"><rect x="988" y="140" width="303" height="338" fill="#000"/><rect x="988.5" y="140.5" width="302" height="337" fill="none" stroke="#6a6a6a"/><path d="M1025.5 144V456M1058.5 144V456M1092.5 144V456M1125.5 144V456M1158.5 144V456M1191.5 144V456M1225.5 144V456M1258.5 144V456M1291.5 144V456M991 154.5H1300M991 191.5H1300M991 229.5H1300M991 265.5H1300M991 300.5H1300M991 338.5H1300M991 376.5H1300M991 413.5H1300M991 450.5H1300" stroke="#bdbdbd" stroke-width="1" stroke-dasharray="3 3" fill="none"/><path d="M991 261.5H1300" stroke="#c8c8c8" stroke-width="1"/><path d="M991.5 144V456.5H1300" stroke="#d0d0d0" stroke-width="1" fill="none"/><path d="M991 144.5H1300.5V456" stroke="#d0d0d0" stroke-width="1" fill="none"/><path d="M992.5 358V373M990.5 363.5h1.5M992.5 366.5h2M996.5 354V372M994.5 361.5h1.5M996.5 364.5h2M1000.5 353V387M998.5 372.5h1.5M1000.5 361.5h2M1004.5 355V397M1002.5 363.5h1.5M1004.5 384.5h2M1009.5 375V416M1007.5 390.5h1.5M1009.5 389.5h2M1013.5 387V411M1011.5 406.5h1.5M1013.5 398.5h2M1017.5 379V396M1015.5 390.5h1.5M1017.5 387.5h2M1021.5 383V407M1019.5 397.5h1.5M1021.5 389.5h2M1025.5 350V408M1023.5 383.5h1.5M1025.5 391.5h2M1030.5 342V375M1028.5 359.5h1.5M1030.5 363.5h2M1034.5 328V373M1032.5 355.5h1.5M1034.5 338.5h2M1038.5 331V358M1036.5 349.5h1.5M1038.5 346.5h2M1042.5 346V360M1040.5 351.5h1.5M1042.5 349.5h2M1046.5 345V368M1044.5 361.5h1.5M1046.5 356.5h2M1050.5 341V383M1048.5 367.5h1.5M1050.5 371.5h2M1054.5 341V373M1052.5 361.5h1.5M1054.5 365.5h2M1059.5 305V346M1057.5 323.5h1.5M1059.5 333.5h2M1062.5 307V325M1060.5 315.5h1.5M1062.5 320.5h2M1066.5 298V314M1064.5 309.5h1.5M1066.5 302.5h2M1070.5 295V311M1068.5 299.5h1.5M1070.5 300.5h2M1075.5 295V309M1073.5 306.5h1.5M1075.5 301.5h2M1079.5 301V328M1077.5 317.5h1.5M1079.5 311.5h2M1083.5 309V323M1081.5 316.5h1.5M1083.5 315.5h2M1087.5 308V328M1085.5 316.5h1.5M1087.5 319.5h2M1091.5 301V325M1089.5 314.5h1.5M1091.5 319.5h2M1096.5 302V323M1094.5 315.5h1.5M1096.5 318.5h2M1100.5 282V327M1098.5 314.5h1.5M1100.5 318.5h2M1104.5 280V293M1102.5 288.5h1.5M1104.5 284.5h2M1108.5 242V277M1106.5 267.5h1.5M1108.5 269.5h2M1112.5 243V255M1110.5 252.5h1.5M1112.5 250.5h2M1116.5 241V254M1114.5 249.5h1.5M1116.5 245.5h2M1121.5 248V263M1119.5 258.5h1.5M1121.5 256.5h2M1125.5 236V323M1123.5 268.5h1.5M1125.5 257.5h2M1129.5 288V323M1127.5 312.5h1.5M1129.5 315.5h2M1133.5 281V322M1131.5 291.5h1.5M1133.5 308.5h2M1138.5 308V337M1136.5 321.5h1.5M1138.5 316.5h2M1142.5 309V322M1140.5 314.5h1.5M1142.5 317.5h2M1146.5 304V319M1144.5 315.5h1.5M1146.5 308.5h2M1150.5 309V362M1148.5 339.5h1.5M1150.5 321.5h2M1155.5 306V374M1153.5 349.5h1.5M1155.5 333.5h2M1159.5 343V401M1157.5 385.5h1.5M1159.5 389.5h2M1163.5 380V401M1161.5 391.5h1.5M1163.5 397.5h2M1167.5 381V396M1165.5 387.5h1.5M1167.5 385.5h2M1171.5 369V394M1169.5 383.5h1.5M1171.5 374.5h2M1175.5 353V405M1173.5 369.5h1.5M1175.5 376.5h2M1179.5 360V400M1177.5 383.5h1.5M1179.5 372.5h2M1184.5 363V401M1182.5 371.5h1.5M1184.5 390.5h2M1188.5 383V399M1186.5 389.5h1.5M1188.5 395.5h2M1192.5 379V399M1190.5 393.5h1.5M1192.5 387.5h2M1196.5 378V394M1194.5 385.5h1.5M1196.5 386.5h2M1200.5 391V446M1198.5 423.5h1.5M1200.5 422.5h2M1204.5 399V425M1202.5 413.5h1.5M1204.5 414.5h2M1208.5 388V414M1206.5 407.5h1.5M1208.5 401.5h2M1212.5 390V421M1210.5 404.5h1.5M1212.5 410.5h2M1217.5 409V422M1215.5 413.5h1.5M1217.5 414.5h2M1221.5 412V439M1219.5 433.5h1.5M1221.5 426.5h2M1225.5 380V449M1223.5 416.5h1.5M1225.5 394.5h2M1229.5 358V394M1227.5 374.5h1.5M1229.5 377.5h2M1233.5 363V391M1231.5 369.5h1.5M1233.5 379.5h2M1237.5 383V394M1235.5 389.5h1.5M1237.5 385.5h2M1242.5 374V391M1240.5 384.5h1.5M1242.5 382.5h2M1246.5 383V390M1244.5 387.5h1.5M1246.5 386.5h2M1250.5 365V399M1248.5 386.5h1.5M1250.5 387.5h2M1254.5 363V410M1252.5 373.5h1.5M1254.5 374.5h2M1258.5 368V420M1256.5 399.5h1.5M1258.5 408.5h2M1262.5 371V391M1260.5 378.5h1.5M1262.5 381.5h2M1266.5 371V380M1264.5 376.5h1.5M1266.5 375.5h2M1271.5 355V379M1269.5 365.5h1.5M1271.5 364.5h2M1275.5 332V368M1273.5 347.5h1.5M1275.5 352.5h2M1279.5 340V379M1277.5 355.5h1.5M1279.5 357.5h2M1283.5 338V378M1281.5 364.5h1.5M1283.5 346.5h2M1287.5 340V359M1285.5 350.5h1.5M1287.5 352.5h2" stroke="#48c448" stroke-width="1" fill="none"/><path d="M991.5 354.6 C992.8 354.2 997.0 352.6 999.2 352.3 C1001.4 352.0 1001.1 350.5 1004.8 353.0 C1008.5 355.5 1016.9 364.9 1021.5 367.4 C1026.2 369.9 1029.9 367.4 1032.7 368.0 C1035.5 368.6 1035.5 370.7 1038.3 370.8 C1041.1 370.9 1046.7 369.0 1049.5 368.5 C1052.3 368.0 1053.3 368.6 1055.0 368.0 C1056.7 367.4 1057.3 368.2 1059.5 365.2 C1061.7 362.2 1064.8 355.2 1068.0 350.0 C1071.2 344.8 1074.8 337.8 1078.4 334.0 C1082.0 330.2 1086.1 329.6 1089.6 327.4 C1093.1 325.2 1095.9 325.5 1099.6 320.7 C1103.3 315.9 1108.1 303.7 1112.0 298.3 C1115.9 292.9 1119.5 289.7 1123.0 288.2 C1126.5 286.7 1128.5 289.0 1133.0 289.3 C1137.5 289.6 1145.9 288.1 1149.9 289.9 C1154.0 291.6 1153.2 291.9 1157.3 299.8 C1161.4 307.7 1168.9 326.2 1174.7 337.0 C1180.5 347.8 1186.2 355.7 1192.0 364.4 C1197.8 373.1 1204.4 383.7 1209.5 389.3 C1214.6 394.9 1217.4 396.6 1222.4 398.0 C1227.5 399.4 1234.4 398.0 1239.8 398.0 C1245.2 398.0 1249.7 399.4 1254.7 398.0 C1259.7 396.6 1265.5 392.4 1269.6 389.3 C1273.7 386.2 1275.9 381.8 1279.5 379.3 C1283.1 376.8 1289.1 375.3 1291.0 374.5" stroke="#d23c26" stroke-width="1" fill="none"/><path d="M991.5 456v4" stroke="#d0d0d0"/><text x="991" y="469" font-family="Liberation Sans" font-size="10" fill="#e6e6e6">29 Mar 2021</text><path d="M1058.5 456v4" stroke="#d0d0d0"/><text x="1057.6" y="469" font-family="Liberation Sans" font-size="10" fill="#e6e6e6">1 Apr 15:00</text><path d="M1124.5 456v4" stroke="#d0d0d0"/><text x="1124" y="469" font-family="Liberation Sans" font-size="10" fill="#e6e6e6">6 Apr 07:00</text><path d="M1191.5 456v4" stroke="#d0d0d0"/><text x="1190.7" y="469" font-family="Liberation Sans" font-size="10" fill="#e6e6e6">8 Apr 23:00</text><path d="M1257.5 456v4" stroke="#d0d0d0"/><text x="1257" y="469" font-family="Liberation Sans" font-size="10" fill="#e6e6e6">13 Apr 15:00</text><text x="996" y="156.5" font-family="Liberation Sans" font-size="10" fill="#ececec" xml:space="preserve" style="white-space:pre">GBPUSD,H4  1.3900 1.3900 1.3887 1.3891</text></g></svg>
<svg style="left:213px;top:520px" width="755" height="90" viewBox="213 520 755 90"><defs><clipPath id="c213520"><rect x="213" y="520" width="755" height="90"/></clipPath></defs><g clip-path="url(#c213520)"><rect x="213" y="520" width="755" height="90" fill="#000"/><rect x="213.5" y="520.5" width="754" height="89" fill="none" stroke="#6a6a6a"/><path d="M251.5 524V640M284.5 524V640M317.5 524V640M351.5 524V640M384.5 524V640M417.5 524V640M451.5 524V640M484.5 524V640M517.5 524V640M551.5 524V640M584.5 524V640M617.5 524V640M651.5 524V640M684.5 524V640M717.5 524V640M751.5 524V640M784.5 524V640M817.5 524V640M851.5 524V640M884.5 524V640M917.5 524V640M217 553.5H926M217 588.5H926" stroke="#bdbdbd" stroke-width="1" stroke-dasharray="3 3" fill="none"/><path d="M217.5 524V640.5H926" stroke="#d0d0d0" stroke-width="1" fill="none"/><path d="M217 524.5H926.5V640" stroke="#d0d0d0" stroke-width="1" fill="none"/><path d="M218.5 573V580M216.5 576.5h1.5M218.5 575.5h2M222.5 572V577M220.5 575.5h1.5M222.5 574.5h2M227.5 560V575M225.5 565.5h1.5M227.5 567.5h2M231.5 560V565M229.5 563.5h1.5M231.5 561.5h2M235.5 553V566M233.5 558.5h1.5M235.5 558.5h2M239.5 560V563M237.5 562.5h1.5M239.5 561.5h2M243.5 556V564M241.5 562.5h1.5M243.5 558.5h2M248.5 552V561M246.5 555.5h1.5M248.5 557.5h2M252.5 548V566M250.5 561.5h1.5M252.5 556.5h2M256.5 551V563M254.5 555.5h1.5M256.5 554.5h2M260.5 553V571M258.5 562.5h1.5M260.5 558.5h2M264.5 544V563M262.5 557.5h1.5M264.5 557.5h2M269.5 549V557M267.5 551.5h1.5M269.5 552.5h2M273.5 544V553M271.5 550.5h1.5M273.5 549.5h2M277.5 539V553M275.5 548.5h1.5M277.5 544.5h2M281.5 538V555M279.5 543.5h1.5M281.5 544.5h2M285.5 546V569M283.5 562.5h1.5M285.5 554.5h2M289.5 562V567M287.5 564.5h1.5M289.5 564.5h2M293.5 560V565M291.5 562.5h1.5M293.5 562.5h2M297.5 561V565M295.5 564.5h1.5M297.5 562.5h2M302.5 560V568M300.5 562.5h1.5M302.5 566.5h2M306.5 561V569M304.5 567.5h1.5M306.5 567.5h2M310.5 555V565M308.5 559.5h1.5M310.5 563.5h2M314.5 556V564M312.5 562.5h1.5M314.5 559.5h2M318.5 553V563M316.5 559.5h1.5M318.5 560.5h2M322.5 556V564M320.5 561.5h1.5M322.5 560.5h2M326.5 552V562M324.5 556.5h1.5M326.5 556.5h2M331.5 554V571M329.5 560.5h1.5M331.5 558.5h2M335.5 569V594M333.5 582.5h1.5M335.5 578.5h2M339.5 587V590M337.5 589.5h1.5M339.5 587.5h2M343.5 584V594M341.5 591.5h1.5M343.5 590.5h2M347.5 579V586M345.5 584.5h1.5M347.5 584.5h2M351.5 573V590M349.5 585.5h1.5M351.5 582.5h2M355.5 575V595M353.5 579.5h1.5M355.5 588.5h2" stroke="#48c448" stroke-width="1" fill="none"/><path d="M926 553.5h3" stroke="#d0d0d0"/><text x="931" y="557.6" font-family="Liberation Sans" font-size="10" fill="#ececec">0.9440</text><path d="M926 588.5h3" stroke="#d0d0d0"/><text x="931" y="592.9" font-family="Liberation Sans" font-size="10" fill="#ececec">0.9365</text><text x="222" y="536" font-family="Liberation Sans" font-size="10" fill="#ececec" xml:space="preserve" style="white-space:pre">USDCHF,H4  0.9076 0.9087 0.9071 0.9082</text></g></svg>
<svg style="left:988px;top:520px" width="303" height="90" viewBox="988 520 303 90"><defs><clipPath id="c988520"><rect x="988" y="520" width="303" height="90"/></clipPath></defs><g clip-path="url(#c988520)"><rect x="988" y="520" width="303" height="90" fill="#000"/><rect x="988.5" y="520.5" width="302" height="89" fill="none" stroke="#6a6a6a"/><path d="M1025.5 524V640M1058.5 524V640M1092.5 524V640M1125.5 524V640M1158.5 524V640M1191.5 524V640M1225.5 524V640M1258.5 524V640M1291.5 524V640M991 541.5H1300M991 579.5H1300" stroke="#bdbdbd" stroke-width="1" stroke-dasharray="3 3" fill="none"/><path d="M991 591.5H1300" stroke="#c8c8c8" stroke-width="1"/><path d="M991.5 524V640.5H1300" stroke="#d0d0d0" stroke-width="1" fill="none"/><path d="M991 524.5H1300.5V640" stroke="#d0d0d0" stroke-width="1" fill="none"/><text x="996" y="536" font-family="Liberation Sans" font-size="10" fill="#ececec" xml:space="preserve" style="white-space:pre">USDJPY,H4  109.22 109.25 109.09 109.09</text></g></svg>
<div class="a" style="left:203px;top:609px;width:1089px;height:3px;background:#e4e4e4"></div>
<div class="a" style="left:203px;top:612px;width:1089px;height:24px;background:linear-gradient(#fff 0,#fff 2px,#f4f4f4 3px)"></div>
<div class="a" style="left:203px;top:611.5px;width:1089px;height:1.5px;background:#2a2a2a"></div>
<div class="a" style="left:209px;top:611px;width:87px;height:21px;background:#fff;border:1px solid #444;border-top:none"></div>
<div class="t" style="left:220.0px;top:616.1px;font-size:12.2px;color:#222;font-weight:400;transform:scaleX(.89);transform-origin:0 0">EURUSD,H4</div>
<div class="t" style="left:306.0px;top:616.1px;font-size:12.2px;color:#8a8a8a;font-weight:400;transform:scaleX(.89);transform-origin:0 0">USDCHF,H4</div>
<div class="a" style="left:383px;top:614px;width:1px;height:15px;background:#a8a8a8"></div>
<div class="t" style="left:395.0px;top:616.1px;font-size:12.2px;color:#8a8a8a;font-weight:400;transform:scaleX(.89);transform-origin:0 0">GBPUSD,H4</div>
<div class="a" style="left:470px;top:614px;width:1px;height:15px;background:#a8a8a8"></div>
<div class="t" style="left:482.0px;top:616.1px;font-size:12.2px;color:#8a8a8a;font-weight:400;transform:scaleX(.89);transform-origin:0 0">USDJPY,H4</div>
<div class="a" style="left:553px;top:614px;width:1px;height:15px;background:#a8a8a8"></div>
<svg style="left:1256px;top:617px" width="30" height="10"><path d="M6 1v8l-4-4z" fill="#999"/><path d="M24 1v8l4-4z" fill="#999"/></svg>
<div class="a" style="left:8px;top:636px;width:1284px;height:1px;background:#c8c8c8"></div>
<div class="a" style="left:8px;top:631px;width:195px;height:1px;background:#b4b4b4"></div>
<div class="a" style="left:202px;top:611px;width:2px;height:21px;background:#555"></div>
<div class="a" style="left:8px;top:637px;width:1284px;height:136px;background:#f4f4f4"></div>
<svg style="left:12px;top:640px" width="7" height="6"><path d="M.5 .5l6 5M6.5 .5l-6 5" stroke="#000" stroke-width="1.6"/></svg>
<div class="a" style="left:9px;top:650px;width:13px;height:121px;background:linear-gradient(90deg,#c9d7e8,#d8e3ef)"></div>
<div class="t" style="left:9.5px;top:767px;font-size:11px;color:#4a5a6e;transform-origin:0 0;transform:rotate(-90deg);line-height:12px">Терминал</div>
<div class="a" style="left:23px;top:637px;width:1266px;height:110px;background:#fff;border:1px solid #c8c8c8"></div>
<div class="a" style="left:24px;top:638px;width:1247px;height:23px;background:linear-gradient(#fff,#f4f4f4)"></div>
<div class="a" style="left:24px;top:661px;width:1247px;height:1px;background:#dedede"></div>
<div class="a" style="left:832px;top:638px;width:1px;height:108px;background:#e4e4e4"></div>
<div class="a" style="left:1187px;top:638px;width:1px;height:108px;background:#e4e4e4"></div>
<div class="t" style="left:30.0px;top:644.1px;font-size:12.2px;color:#222;font-weight:400;">Название</div>
<div class="t" style="left:840.5px;top:644.1px;font-size:12.2px;color:#222;font-weight:400;">Категория</div>
<div class="t" style="left:1243.5px;top:644.1px;font-size:12.2px;color:#222;font-weight:400;transform:translateX(-100%)">Дата</div>
<svg style="left:1255px;top:646px" width="8" height="8"><path d="M.5 .5h7l-3.5 7z" fill="none" stroke="#888" stroke-width=".9"/></svg>
<div class="a" style="left:24px;top:682px;width:1247px;height:1px;background:#dcdcdc"></div>
<svg style="left:28px;top:667.0px" width="10" height="12"><path d="M.5 .5h6l3 3v8h-9z" fill="#fdf6c8" stroke="#b8a860"/><path d="M6.5 .5v3h3" fill="none" stroke="#b8a860"/></svg>
<div class="t" style="left:46.0px;top:667.4px;font-size:12.2px;color:#1a1a1a;font-weight:400;">Веб-проекты (Часть I): Создание веб-приложения в схеме Laravel/Nuxt/MetaTrader 5</div>
<div class="t" style="left:837.0px;top:667.4px;font-size:12.2px;color:#1a1a1a;font-weight:400;">Примеры, Интеграция, Эксперты, Статистика и анализ</div>
<div class="t" style="left:1266.0px;top:667.4px;font-size:12.2px;color:#1a1a1a;font-weight:400;transform:translateX(-100%)">2022.02.09</div>
<div class="a" style="left:24px;top:682px;width:1247px;height:21px;background:#eeeeee"></div>
<div class="a" style="left:24px;top:703px;width:1247px;height:1px;background:#dcdcdc"></div>
<svg style="left:28px;top:687.9px" width="10" height="12"><path d="M.5 .5h6l3 3v8h-9z" fill="#fdf6c8" stroke="#b8a860"/><path d="M6.5 .5v3h3" fill="none" stroke="#b8a860"/></svg>
<div class="t" style="left:46.0px;top:688.3px;font-size:12.2px;color:#1a1a1a;font-weight:400;">Графика в библиотеке DoEasy (Часть 95): Элементы управления составными графическими объектами</div>
<div class="t" style="left:837.0px;top:688.3px;font-size:12.2px;color:#1a1a1a;font-weight:400;">Примеры</div>
<div class="t" style="left:1266.0px;top:688.3px;font-size:12.2px;color:#1a1a1a;font-weight:400;transform:translateX(-100%)">2022.02.04</div>
<div class="a" style="left:24px;top:724px;width:1247px;height:1px;background:#dcdcdc"></div>
<svg style="left:28px;top:708.8px" width="10" height="12"><path d="M.5 .5h6l3 3v8h-9z" fill="#fdf6c8" stroke="#b8a860"/><path d="M6.5 .5v3h3" fill="none" stroke="#b8a860"/></svg>
<div class="t" style="left:46.0px;top:709.2px;font-size:12.2px;color:#1a1a1a;font-weight:400;">Использование AutoIt с MQL5</div>
<div class="t" style="left:837.0px;top:709.2px;font-size:12.2px;color:#1a1a1a;font-weight:400;">Примеры, Интеграция, Эксперты</div>
<div class="t" style="left:1266.0px;top:709.2px;font-size:12.2px;color:#1a1a1a;font-weight:400;transform:translateX(-100%)">2022.02.01</div>
<div class="a" style="left:24px;top:724px;width:1247px;height:21px;background:#eeeeee"></div>
<div class="a" style="left:24px;top:745px;width:1247px;height:1px;background:#dcdcdc"></div>
<svg style="left:28px;top:729.7px" width="10" height="12"><path d="M.5 .5h6l3 3v8h-9z" fill="#fdf6c8" stroke="#b8a860"/><path d="M6.5 .5v3h3" fill="none" stroke="#b8a860"/></svg>
<div class="t" style="left:46.0px;top:730.1px;font-size:12.2px;color:#1a1a1a;font-weight:400;">Графика в библиотеке DoEasy (Часть 94): Составные графические объекты, перемещение и удаление</div>
<div class="t" style="left:837.0px;top:730.1px;font-size:12.2px;color:#1a1a1a;font-weight:400;">Примеры</div>
<div class="t" style="left:1266.0px;top:730.1px;font-size:12.2px;color:#1a1a1a;font-weight:400;transform:translateX(-100%)">2022.01.28</div>
<div class="a" style="left:1271px;top:638px;width:17px;height:108px;background:#f4f4f4;border-left:1px solid #e8e8e8"></div>
<svg style="left:1275px;top:645px" width="9" height="6"><path d="M0 5l4.5-4.5 4.5 4.5z" fill="#333"/></svg>
<svg style="left:1275px;top:737px" width="9" height="6"><path d="M0 1l4.5 4.5 4.5-4.5z" fill="#333"/></svg>
<div class="a" style="left:1272px;top:656px;width:15px;height:17px;background:linear-gradient(90deg,#eee,#dcdcdc);border:1px solid #a8a8a8;border-radius:2px"></div>
<div class="a" style="left:23px;top:746px;width:1266px;height:2px;background:#222"></div>
<div class="a" style="left:218px;top:747px;width:82px;height:21px;background:#fff;border:1px solid #444;border-top:none"></div>
<div class="t" style="left:36.5px;top:750.6px;font-size:12.2px;color:#8a8a8a;font-weight:400;">Алерты</div>
<div class="t" style="left:100.0px;top:750.6px;font-size:12.2px;color:#8a8a8a;font-weight:400;">Почта</div>
<div class="t" style="left:165.0px;top:750.6px;font-size:12.2px;color:#8a8a8a;font-weight:400;">Маркет</div>
<div class="t" style="left:228.0px;top:750.6px;font-size:12.2px;color:#111;font-weight:400;">Статьи</div>
<div class="t" style="left:311.0px;top:750.6px;font-size:12.2px;color:#8a8a8a;font-weight:400;">Библиотека</div>
<div class="t" style="left:398.5px;top:750.6px;font-size:12.2px;color:#8a8a8a;font-weight:400;">Эксперты</div>
<div class="t" style="left:475.0px;top:750.6px;font-size:12.2px;color:#8a8a8a;font-weight:400;">Журнал</div>
<div class="a" style="left:90px;top:751px;width:1px;height:14px;background:#a8a8a8"></div>
<div class="a" style="left:154px;top:751px;width:1px;height:14px;background:#a8a8a8"></div>
<div class="a" style="left:390px;top:751px;width:1px;height:14px;background:#a8a8a8"></div>
<div class="a" style="left:463px;top:751px;width:1px;height:14px;background:#a8a8a8"></div>
<div class="a" style="left:531px;top:751px;width:1px;height:14px;background:#a8a8a8"></div>
<div class="t" style="left:138.0px;top:756.4px;font-size:9.5px;color:#e03030;font-weight:700;">6</div>
<div class="t" style="left:268.0px;top:756.9px;font-size:9px;color:#e03030;font-weight:700;">1088</div>
<div class="a" style="left:8px;top:773px;width:1284px;height:1px;background:#a8a8a8"></div>
<div class="a" style="left:8px;top:774px;width:1284px;height:24px;background:linear-gradient(#f2f2f2,#ececec)"></div>
<div class="t" style="left:10.0px;top:781.6px;font-size:12.2px;color:#1a1a1a;font-weight:400;">Для вызова справки нажмите F1</div>
<div class="a" style="left:551px;top:775px;width:1px;height:22px;background:#c4c4c4"></div>
<div class="a" style="left:671px;top:775px;width:1px;height:22px;background:#c4c4c4"></div>
<div class="a" style="left:777px;top:775px;width:1px;height:22px;background:#c4c4c4"></div>
<div class="a" style="left:852px;top:775px;width:1px;height:22px;background:#c4c4c4"></div>
<div class="a" style="left:925px;top:775px;width:1px;height:22px;background:#c4c4c4"></div>
<div class="a" style="left:995px;top:775px;width:1px;height:22px;background:#c4c4c4"></div>
<div class="a" style="left:1069px;top:775px;width:1px;height:22px;background:#c4c4c4"></div>
<div class="a" style="left:1138px;top:775px;width:1px;height:22px;background:#c4c4c4"></div>
<div class="t" style="left:557.0px;top:781.6px;font-size:12.2px;color:#1a1a1a;font-weight:400;">Default</div>
<svg style="left:1144px;top:779px" width="24" height="14"><rect x="0.0" y="3" width="1.6" height="10" fill="#a83818"/><rect x="2.6" y="1" width="1.6" height="12" fill="#a83818"/><rect x="5.2" y="3" width="1.6" height="10" fill="#a83818"/><rect x="7.8" y="1" width="1.6" height="12" fill="#a83818"/><rect x="10.4" y="3" width="1.6" height="10" fill="#a83818"/><rect x="13.0" y="1" width="1.6" height="12" fill="#a83818"/><rect x="15.6" y="3" width="1.6" height="10" fill="#a83818"/><rect x="18.2" y="1" width="1.6" height="12" fill="#a83818"/><rect x="20.8" y="3" width="1.6" height="10" fill="#a83818"/></svg>
<div class="t" style="left:1171.0px;top:781.6px;font-size:12.2px;color:#1a1a1a;font-weight:400;">Нет связи</div>
<svg style="left:1276px;top:782px" width="14" height="14"><path d="M13 2L2 13M13 6L6 13M13 10L10 13" stroke="#b0b0b0" stroke-width="1.2"/></svg>
<div class="a" style="left:357px;top:189px;width:585px;height:426px;background:linear-gradient(#d0e1f4,#b7d0ec 28px,#bcd4ee 40px,#c0d6ee);border:1px solid #4a5a70;border-bottom-color:#333;border-radius:6px 6px 0 0;box-shadow:inset 0 0 0 1px rgba(255,255,255,.55), inset 0 -2px 0 #6ccdf2"></div>
<div class="t" style="left:370.0px;top:202.4px;font-size:12.2px;color:#1e3250;font-weight:400;">Открыть Счет</div>
<div class="a" style="left:865px;top:199px;width:32px;height:17px;background:linear-gradient(#e4eef9 0,#d2e2f2 45%,#a8c0dc 50%,#b8cee6);border:1px solid #6a7c94;border-radius:3px;box-shadow:inset 0 0 0 1px rgba(255,255,255,.5)"></div>
<div class="a" style="left:899px;top:199px;width:32px;height:17px;background:linear-gradient(#f2b4a0 0,#e89078 45%,#c9502e 50%,#e07850);border:1px solid #5a2a2a;border-radius:3px;box-shadow:inset 0 0 0 1px rgba(255,255,255,.35)"></div>
<svg style="left:865px;top:199px" width="66" height="17"><text x="16" y="13" font-family="Liberation Sans" font-size="12" font-weight="700" fill="#fff" stroke="#3a4558" stroke-width="2" paint-order="stroke" text-anchor="middle">?</text><path d="M46 5l8 6.5M54 5l-8 6.5" stroke="#3a2a2a" stroke-width="4.2" stroke-linecap="round"/><path d="M46 5l8 6.5M54 5l-8 6.5" stroke="#fff" stroke-width="2.3"/></svg>
<div class="a" style="left:365px;top:219px;width:569px;height:387px;background:#f4f4f4;border:1px solid #a8c0dc;border-bottom-color:#fff"></div>
<div class="a" style="left:366px;top:220px;width:567px;height:60px;background:#fff"></div>
<div class="a" style="left:366px;top:280px;width:567px;height:1px;background:#a0a0a0"></div>
<div class="a" style="left:366px;top:281px;width:567px;height:1px;background:#fff"></div>
<div class="t" style="left:389.0px;top:230.6px;font-size:12.2px;color:#1a1a1a;font-weight:700;">Персональные данные</div>
<div class="t" style="left:412.0px;top:247.2px;font-size:11.4px;color:#1a1a1a;font-weight:400;">Для открытия счета заполните следующие поля, пожалуйста:</div>
<div class="t" style="left:478.6px;top:313.3px;font-size:11.6px;color:#1a1a1a;font-weight:400;transform:translateX(-100%)">Имя:</div>
<div class="a" style="left:486px;top:308px;width:327px;height:20px;background:#fff;border:1px solid #c2c8d0;border-top-color:#abadb3;border-radius:2px"></div>
<div class="t" style="left:488.6px;top:313.4px;font-size:11px;color:#1a1a1a;font-weight:400;">Colltrade</div>
<div class="t" style="left:478.6px;top:342.2px;font-size:11.6px;color:#1a1a1a;font-weight:400;transform:translateX(-100%)">E-Mail:</div>
<div class="a" style="left:486px;top:337px;width:203px;height:20px;background:#fff;border:1px solid #c2c8d0;border-top-color:#abadb3;border-radius:2px"></div>
<div class="t" style="left:488.6px;top:342.3px;font-size:11.2px;color:#1a1a1a;font-weight:400;">gwj01241@aegde.com</div>
<div class="t" style="left:478.6px;top:371.1px;font-size:11.6px;color:#1a1a1a;font-weight:400;transform:translateX(-100%)">Телефон:</div>
<div class="a" style="left:486px;top:366px;width:71px;height:21px;background:#fff;border:1px solid #c2c8d0;border-top-color:#abadb3;border-radius:2px"></div>
<div class="t" style="left:488.6px;top:371.2px;font-size:11.2px;color:#1a1a1a;font-weight:400;">+7</div>
<svg style="left:543px;top:375px" width="9" height="5"><path d="M0 0h9l-4.5 5z" fill="#111"/></svg>
<div class="a" style="left:564px;top:366px;width:125px;height:21px;background:#fff;border:1px solid #c2c8d0;border-top-color:#abadb3;border-radius:2px"></div>
<div class="t" style="left:567.0px;top:371.2px;font-size:11.2px;color:#1a1a1a;font-weight:400;">000000</div>
<div class="t" style="left:478.6px;top:406.3px;font-size:11.6px;color:#1a1a1a;font-weight:400;transform:translateX(-100%)">Тип счета:</div>
<div class="a" style="left:486px;top:402px;width:203px;height:21px;background:linear-gradient(#f6f6f6,#e8e8e8 50%,#dcdcdc 51%,#d4d4d4);border:1px solid #707070;border-radius:3px"></div>
<div class="t" style="left:488.6px;top:406.4px;font-size:11.2px;color:#1a1a1a;font-weight:400;">forex-USD</div>
<svg style="left:675px;top:410px" width="9" height="5"><path d="M0 0h9l-4.5 5z" fill="#111"/></svg>
<div class="t" style="left:478.6px;top:435.2px;font-size:11.6px;color:#1a1a1a;font-weight:400;transform:translateX(-100%)">Депозит:</div>
<div class="a" style="left:486px;top:430px;width:93px;height:21px;background:#fff;border:1px solid #c2c8d0;border-top-color:#abadb3;border-radius:2px"></div>
<div class="t" style="left:488.6px;top:435.3px;font-size:11.2px;color:#1a1a1a;font-weight:400;">1000</div>
<svg style="left:566px;top:438.5px" width="9" height="5"><path d="M0 0h9l-4.5 5z" fill="#111"/></svg>
<div class="t" style="left:585.0px;top:435.2px;font-size:11.6px;color:#1a1a1a;font-weight:400;">USD</div>
<div class="t" style="left:478.6px;top:464.1px;font-size:11.6px;color:#1a1a1a;font-weight:400;transform:translateX(-100%)">Плечо:</div>
<div class="a" style="left:486px;top:460px;width:93px;height:20px;background:linear-gradient(#f6f6f6,#e8e8e8 50%,#dcdcdc 51%,#d4d4d4);border:1px solid #707070;border-radius:3px"></div>
<div class="t" style="left:488.6px;top:464.2px;font-size:11.2px;color:#1a1a1a;font-weight:400;">1:500</div>
<svg style="left:566px;top:467.5px" width="9" height="5"><path d="M0 0h9l-4.5 5z" fill="#111"/></svg>
<svg style="left:485px;top:526px" width="14" height="14"><rect x="0.5" y="0.5" width="13" height="13" fill="#f4f6fa" stroke="#8e8f8f"/><rect x="2.5" y="2.5" width="9" height="9" fill="#dfe6f0" stroke="#b8c4d4" stroke-width=".6"/><path d="M3.5 7l2.5 3 4.5-7" stroke="#1c3d8c" stroke-width="1.8" fill="none"/></svg>
<div class="t" style="left:503.0px;top:526.4px;font-size:11.4px;color:#1a1a1a;font-weight:400;">Я согласен получать новости по почте</div>
<div class="a" style="left:366px;top:557px;width:567px;height:1px;background:#d8d8d8"></div>
<div class="a" style="left:366px;top:558px;width:567px;height:1px;background:#fff"></div>
<div class="a" style="left:680px;top:573px;width:75px;height:22px;background:linear-gradient(#f2f2f2,#ebebeb 50%,#dddddd 51%,#cfcfcf);border:1px solid #707070;border-radius:3px;box-shadow:inset 0 0 0 1px rgba(255,255,255,.7)"></div>
<div class="t" style="left:696.0px;top:578.6px;font-size:11.8px;color:#1a1a1a;font-weight:400;">&lt; Назад</div>
<div class="a" style="left:758px;top:573px;width:76px;height:22px;background:linear-gradient(#f0f7fc,#e2eff8 50%,#d2e6f3 51%,#c6dff0);border:1px solid #3c7fb1;border-radius:3px;box-shadow:inset 0 0 0 1px rgba(255,255,255,.7)"></div>
<div class="t" style="left:773.0px;top:578.6px;font-size:11.8px;color:#1a1a1a;font-weight:400;">Далее &gt;</div>
<div class="a" style="left:846px;top:573px;width:76px;height:22px;background:linear-gradient(#f2f2f2,#ebebeb 50%,#dddddd 51%,#cfcfcf);border:1px solid #707070;border-radius:3px;box-shadow:inset 0 0 0 1px rgba(255,255,255,.7)"></div>
<div class="t" style="left:863.0px;top:578.6px;font-size:11.8px;color:#1a1a1a;font-weight:400;">Отмена</div>
<svg style="left:772px;top:573px" width="14" height="21"><path d="M1 1v16l4-4 3 6 2.5-1-3-6h5.5z" fill="#fff" stroke="#000" stroke-width="1"/></svg></body></html>
